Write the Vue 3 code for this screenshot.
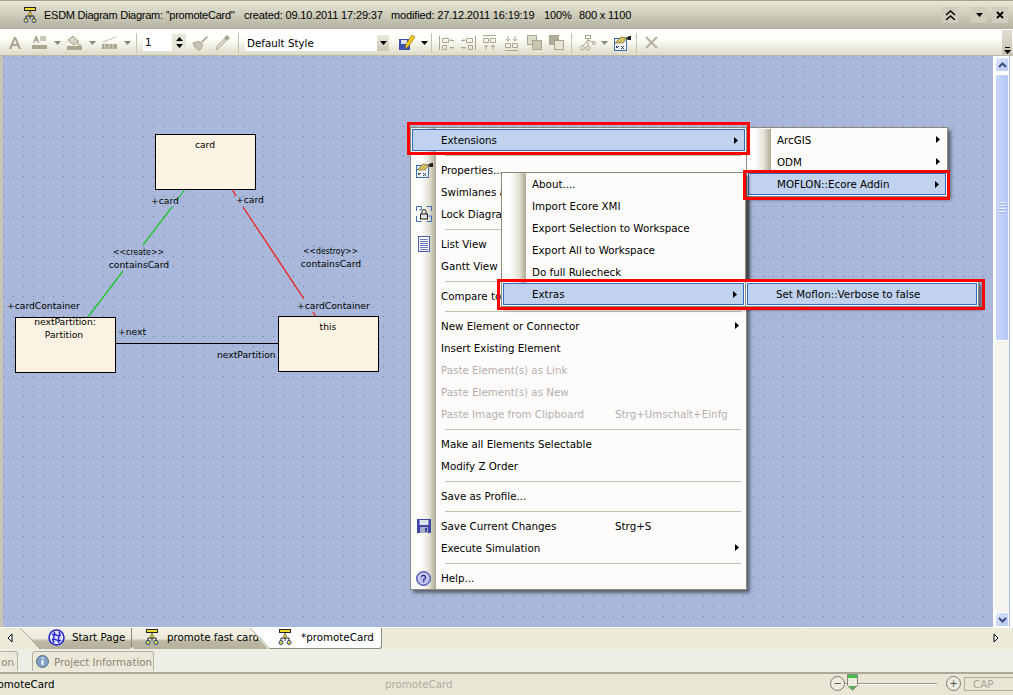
<script setup>
const mainMenu = [
  { label: 'Extensions', arrow: true, active: true },
  { sep: true },
  { label: 'Properties...', icon: 'props' },
  { label: 'Swimlanes and Matrix...' },
  { label: 'Lock Diagram', icon: 'lock' },
  { sep: true },
  { label: 'List View', icon: 'list' },
  { label: 'Gantt View' },
  { sep: true },
  { label: 'Compare to Baseline' },
  { sep: true },
  { label: 'New Element or Connector', arrow: true },
  { label: 'Insert Existing Element' },
  { label: 'Paste Element(s) as Link', off: true },
  { label: 'Paste Element(s) as New', off: true },
  { label: 'Paste Image from Clipboard', off: true, key: 'Strg+Umschalt+Einfg' },
  { sep: true },
  { label: 'Make all Elements Selectable' },
  { label: 'Modify Z Order' },
  { sep: true },
  { label: 'Save as Profile...' },
  { sep: true },
  { label: 'Save Current Changes', icon: 'save', key: 'Strg+S' },
  { label: 'Execute Simulation', arrow: true },
  { sep: true },
  { label: 'Help...', icon: 'help' },
]

const extMenu = [
  { label: 'ArcGIS', arrow: true },
  { label: 'ODM', arrow: true },
  { label: 'MOFLON::Ecore Addin', arrow: true, active: true },
]

const addinMenu = [
  { label: 'About....' },
  { label: 'Import Ecore XMI' },
  { label: 'Export Selection to Workspace' },
  { label: 'Export All to Workspace' },
  { label: 'Do full Rulecheck' },
  { label: 'Extras', arrow: true, active: true },
]

const boxes = [
  { x: 155.5, y: 134.5, w: 100, h: 55 },
  { x: 15.5, y: 317.5, w: 100, h: 55 },
  { x: 278.5, y: 316.5, w: 100, h: 55 },
]

const labels = [
  { x: 205, y: 148, t: 'card', mid: true },
  { x: 65, y: 325, t: 'nextPartition:', mid: true },
  { x: 64, y: 338, t: 'Partition', mid: true },
  { x: 328, y: 330, t: 'this', mid: true },
  { x: 151, y: 204, t: '+card' },
  { x: 236, y: 203, t: '+card' },
  { x: 138.5, y: 255, t: '<<create>>', mid: true, len: 51 },
  { x: 139, y: 268, t: 'containsCard', mid: true },
  { x: 330.5, y: 254, t: '<<destroy>>', mid: true, len: 55 },
  { x: 331, y: 267, t: 'containsCard', mid: true },
  { x: 7, y: 309, t: '+cardContainer' },
  { x: 297, y: 309, t: '+cardContainer' },
  { x: 118, y: 335, t: '+next' },
  { x: 217, y: 358, t: 'nextPartition' },
]
</script>

<template>
  <div class="app">
    <svg class="defs" width="0" height="0">
      <symbol id="diagram" viewBox="0 0 14 16">
        <rect x="1.5" y="0.5" width="11" height="3" fill="#f2dc2c" stroke="#222" />
        <path d="M7 4v8M3 12V9h8v3" fill="none" stroke="#222" />
        <path d="M7 5l2 2-2 2-2-2z" fill="#e8c820" stroke="#444" stroke-width=".5" />
        <circle cx="3" cy="13.5" r="2" fill="#f2dc2c" stroke="#1a3fa0" />
        <circle cx="11" cy="13.5" r="2" fill="#f2dc2c" stroke="#1a3fa0" />
      </symbol>
      <symbol id="props" viewBox="0 0 18 16">
        <rect x="1.5" y="3.5" width="12" height="12" fill="#f4f6fc" stroke="#3a6db5" />
        <path d="M3 11l1.5 1.5L6 11M3 13l1.5-1.5M8 11l3 3M11 11l-3 3" stroke="#30405a" fill="none" />
        <path d="M2 8l6-6 6 1-4 5z" fill="#c9b24a" stroke="#6b5d20" stroke-width=".6" />
        <path d="M5 7l4-4M8 8l3-4" stroke="#f2e9b0" stroke-width=".7" />
        <path d="M13 3l3-2h2v4h-3z" fill="#222" />
      </symbol>
      <symbol id="arrowDown" viewBox="0 0 7 4">
        <path d="M0 0h7L3.5 4z" />
      </symbol>
    </svg>

    <header class="titlebar">
      <svg class="title-icon" width="14" height="16"><use href="#diagram" /></svg>
      <span class="t-name">ESDM Diagram Diagram: ''promoteCard''</span>
      <span class="t-created">created: 09.10.2011 17:29:37</span>
      <span class="t-mod">modified: 27.12.2011 16:19:19</span>
      <span class="t-zoom">100%</span>
      <span class="t-size">800 x 1100</span>
      <div class="title-btns">
        <button class="tbtn wide">
          <svg width="11" height="10" fill="none" stroke="#000" stroke-width="1.5"><path d="M1 5l4.5-4 4.5 4M1 10l4.5-4 4.5 4" /></svg>
        </button>
        <button class="tbtn gap"><svg width="7" height="4"><use href="#arrowDown" /></svg></button>
        <button class="tbtn">
          <svg width="8" height="8" stroke="#000" stroke-width="1.8"><path d="M1 1l6 6M7 1L1 7" /></svg>
        </button>
      </div>
    </header>

    <div class="toolbar">
      <svg class="tool ml8" width="14" height="14" fill="#a8a690"><path d="M1 13L6 1h2l5 12h-2.5l-1-3H4.5l-1 3zM5.3 8h3.4L7 3.5z" /></svg>
      <svg class="tool ml10" width="15" height="15" fill="#a8a690"><path d="M1 8L3.5 1H5l2.5 7H6L5.5 6H3L2.5 8z" /><rect x="8" y="1" width="6" height="5" fill="#c8c6b4" /><rect y="10" width="15" height="4" /></svg>
      <svg class="tool ml7" width="7" height="4" fill="#8a8878"><use href="#arrowDown" /></svg>
      <svg class="tool ml6" width="16" height="16" fill="#a8a690"><path d="M1 5l5-4 5 5-4 4z" fill="#d8d6c4" stroke="#a09e88" /><path d="M11 5v5h3" fill="none" stroke="#a09e88" /><rect y="11" width="15" height="4" /></svg>
      <svg class="tool ml6" width="7" height="4" fill="#8a8878"><use href="#arrowDown" /></svg>
      <svg class="tool ml6" width="16" height="14" fill="#a8a690"><path d="M1 6L14 1" stroke="#c0beaa" /><rect y="8" width="15" height="5" /><path d="M3 7v7M7 7v7M11 7v7" stroke="#e0decc" /></svg>
      <svg class="tool ml6" width="7" height="4" fill="#8a8878"><use href="#arrowDown" /></svg>
      <i class="vsep ml5"></i>
      <div class="num">1</div>
      <div class="spin">
        <svg width="7" height="4"><path d="M0 4h7L3.5 0z" /></svg>
        <svg width="7" height="4"><use href="#arrowDown" /></svg>
      </div>
      <svg class="tool ml6" width="17" height="17"><path d="M1 9l6-2 4 4-3 5c-2 1-6-3-7-7z" fill="#c6c4b0" stroke="#9a9884" stroke-width=".7" /><path d="M9 8l6-6 1 1-6 6z" fill="#9a9884" /></svg>
      <svg class="tool ml5" width="17" height="17"><path d="M2 16l1-4 7-7 2 2-7 7z" fill="#d8d6c4" stroke="#aaa894" stroke-width=".8" /><path d="M10 4l3-3 3 3-3 3z" fill="#a8a690" /></svg>
      <i class="vsep ml7"></i>
      <div class="styles">
        <span>Default Style</span>
        <b><svg width="7" height="4"><use href="#arrowDown" /></svg></b>
      </div>
      <svg class="tool ml9" width="18" height="18"><rect x="1" y="5" width="11" height="11" fill="#3a4fb0" /><rect x="3" y="6" width="6" height="4" fill="#dfe4f4" /><path d="M7 15l1-5 6-9 3 2-6 9z" fill="#f3c61e" stroke="#8a6a10" stroke-width=".6" /></svg>
      <svg class="tool ml5" width="7" height="4"><use href="#arrowDown" /></svg>
      <i class="vsep ml3"></i>
      <svg class="tool ml7" width="16" height="16" fill="none" stroke="#a8a690"><path d="M.5 1v14M3.5 3.5h6v4h-6zM3.5 10.5h4v4h-4zM11 5.5h4M11 12.5h4M11 5.500l2-2M11 12.500l2 2" /></svg>
      <svg class="tool ml5" width="16" height="16" fill="none" stroke="#a8a690"><path d="M15.5 1v14M6.5 3.5h6v4h-6zM8.5 10.5h4v4h-4zM1 5.5h4M1 12.5h4M5 5.500l-2-2M5 12.500l-2 2" /></svg>
      <svg class="tool ml6" width="15" height="16" fill="none" stroke="#a8a690"><path d="M1 .5h13M1.5 3.5h5v4h-5zM8.5 3.5h5v4h-5zM4 15v-5M11 15v-5M4 10l-2 2M4 10l2 2M11 10l-2 2M11 10l2 2" /></svg>
      <svg class="tool ml7" width="15" height="16" fill="none" stroke="#a8a690"><path d="M1 15.5h13M1.5 8.5h5v4h-5zM8.5 8.5h5v4h-5zM4 1v5M11 1v5M4 6L2 4M4 6l2-2M11 6L9 4M11 6l2-2" /></svg>
      <svg class="tool ml8" width="16" height="15" fill="#dcdac8" stroke="#a8a690"><rect x=".5" y=".5" width="9" height="9" /><rect x="5.5" y="5.5" width="9" height="9" fill="#c8c6b4" /></svg>
      <svg class="tool ml6" width="16" height="15" fill="#c8c6b4" stroke="#a8a690"><rect x=".5" y=".5" width="9" height="9" fill="#b0ae9a" /><rect x="5.5" y="5.5" width="9" height="9" fill="#e8e6d6" /></svg>
      <i class="vsep ml6"></i>
      <svg class="tool ml8" width="16" height="16" fill="none" stroke="#a8a690"><rect x="5.5" y=".5" width="5" height="3" /><circle cx="2.5" cy="13" r="2" /><circle cx="8" cy="13" r="2" /><circle cx="14" cy="8" r="1.5" /><path d="M8 4v7M8 5L3 11M8 5l5 2" /></svg>
      <svg class="tool ml5" width="7" height="4" fill="#8a8878"><use href="#arrowDown" /></svg>
      <svg class="tool ml5" width="18" height="16"><use href="#props" /></svg>
      <i class="vsep ml5"></i>
      <svg class="tool ml8" width="13" height="13" stroke="#b4b2a0" stroke-width="2"><path d="M1 1l11 11M12 1L1 12" /></svg>
      <div class="grip">
        <svg width="7" height="7"><path d="M1 0h5v1H1zM0 3h7L3.5 7z" /></svg>
      </div>
    </div>

    <main class="canvas-row">
      <div class="canvas">
        <svg class="diagram" viewBox="3 56 990 570" width="990" height="570">
          <defs>
            <pattern id="dots" width="10" height="10" patternUnits="userSpaceOnUse">
              <rect x="3" y="6" width="1" height="1" fill="#6f7c9c" />
            </pattern>
          </defs>
          <rect x="3" y="56" width="990" height="570" fill="url(#dots)" />
          <path d="M802.5 56V626" stroke="#b6a8c8" stroke-dasharray="4 3" />
          <g fill="none" stroke="#22c62c" stroke-width="1.3">
            <path d="M185 189l-7 10M172 207l-29 38M123 271L88 317" />
          </g>
          <g fill="none" stroke="#f01c1c" stroke-width="1.3">
            <path d="M232 189l4 7M243 207l61 92M313 312l3 5" />
          </g>
          <path d="M116 343.5H278" stroke="#000" />
          <rect v-for="b in boxes" :key="b.x" :x="b.x" :y="b.y" :width="b.w" :height="b.h" fill="#fcf2e3" stroke="#000" />
          <text
            v-for="l in labels"
            :key="l.t + l.x"
            class="lbl"
            :x="l.x"
            :y="l.y"
            :text-anchor="l.mid ? 'middle' : 'start'"
            :textLength="l.len"
            :lengthAdjust="l.len ? 'spacingAndGlyphs' : undefined"
          >{{ l.t }}</text>
        </svg>
      </div>
      <div class="vscroll">
        <div class="sbtn">
          <svg width="9" height="6" fill="none" stroke="#3a4d80" stroke-width="2"><path d="M1 5l3.5-3.5L8 5" /></svg>
        </div>
        <div class="thumb">
          <i></i><i></i><i></i><i></i>
        </div>
        <div class="track"></div>
        <div class="sbtn">
          <svg width="9" height="6" fill="none" stroke="#3a4d80" stroke-width="2"><path d="M1 1l3.5 3.5L8 1" /></svg>
        </div>
      </div>
    </main>

    <nav class="tabs">
      <svg class="tab-nav" width="6" height="10" fill="#fff" stroke="#000"><path d="M5 1v8L1 5z" /></svg>
      <div class="tab first">
        <svg class="slant" width="21" height="21" fill="none" stroke="#77756a"><path d="M0 0l20 21" /></svg>
        <svg width="17" height="17" viewBox="0 0 17 17">
          <circle cx="8.5" cy="8.5" r="7.5" fill="#e4e6fa" stroke="#2424d0" stroke-width="1.6" />
          <path d="M4 6c3-3 5 3 9 0M4 11c4-3 5 3 9 0M6 3c3 3-3 5 0 11M11 3c3 3-3 7 0 11" fill="none" stroke="#2424d0" stroke-width="1.4" />
        </svg>
        <span>Start Page</span>
      </div>
      <div class="tab second">
        <svg width="14" height="16"><use href="#diagram" /></svg>
        <span>promote fast card</span>
      </div>
      <div class="tab current">
        <svg class="slant" width="21" height="21" fill="none" stroke="#77756a"><path d="M0 0l20 21" /></svg>
        <svg width="14" height="16"><use href="#diagram" /></svg>
        <span>*promoteCard</span>
      </div>
      <svg class="tab-next" width="6" height="10" fill="#fff" stroke="#000"><path d="M1 1v8l4-4z" /></svg>
    </nav>

    <div class="panels">
      <div class="panel clipped">on</div>
      <div class="panel info">
        <svg width="13" height="13"><circle cx="6.5" cy="6.5" r="6" fill="#7f9ec0" stroke="#55708f" /><rect x="5.5" y="5" width="2" height="5" fill="#fff" /><rect x="5.5" y="2.5" width="2" height="1.5" fill="#fff" /></svg>
        <span>Project Information</span>
      </div>
    </div>

    <footer class="status">
      <span class="st-left">promoteCard</span>
      <span class="st-mid">promoteCard</span>
      <span class="round">&minus;</span>
      <div class="rail">
        <svg class="knob" width="11" height="17" viewBox="0 0 11 17">
          <path d="M.5.5h10v11l-5 5-5-5z" fill="#eeecdf" stroke="#8a8a7a" />
          <path d="M1 1h9v3H1z" fill="#3fc24a" />
          <path d="M1.500 12l4 4 4-4z" fill="#5aa85a" />
        </svg>
      </div>
      <span class="round">+</span>
      <span class="cap">CAP</span>
    </footer>

    <!-- popup menus -->
    <div class="menu m-main">
      <template v-for="(it, i) in mainMenu" :key="i">
        <div v-if="it.sep" class="sep"></div>
        <div v-else class="item" :class="{ active: it.active, off: it.off }">
          <span class="ico">
            <svg v-if="it.icon === 'props'" width="18" height="16"><use href="#props" /></svg>
            <svg v-else-if="it.icon === 'lock'" width="16" height="16" fill="none" stroke="#3a6db5">
              <path d="M.5 5V.5h5v3h-2M10.5.5h5V5M.5 10v5.500h5M10.5 15.500h5V10h-3" />
              <rect x="4.5" y="8" width="7" height="5" fill="#e4e4e4" stroke="#222" />
              <path d="M6 8V5.500a2 2 0 0 1 4 0V8" stroke="#222" />
            </svg>
            <svg v-else-if="it.icon === 'list'" width="12" height="16" fill="#fff" stroke="#4a58b0">
              <rect x=".5" y=".5" width="11" height="15" />
              <path d="M2 3.5h8M2 5.5h8M2 7.5h8M2 9.5h8M2 11.5h8M2 13.5h8" stroke="#6a78c8" />
            </svg>
            <svg v-else-if="it.icon === 'save'" width="14" height="14">
              <rect width="14" height="14" fill="#3c46a8" />
              <rect x="2.5" y="1" width="9" height="5" fill="#dfe2f2" />
              <rect x="3" y="8" width="8" height="6" fill="#a8acc4" />
              <rect x="8" y="9" width="2" height="4" fill="#3c46a8" />
            </svg>
            <svg v-else-if="it.icon === 'help'" width="15" height="15">
              <circle cx="7.5" cy="7.5" r="7" fill="#8c8fdc" stroke="#4a4dac" />
              <circle cx="7.5" cy="7.5" r="5" fill="#b6b8ec" stroke="#eef" />
              <path d="M5.5 6a2 2 0 1 1 3 2c-1 .5-1 1-1 2" fill="none" stroke="#33358c" stroke-width="1.3" />
              <rect x="7" y="10.5" width="1.3" height="1.3" fill="#33358c" />
            </svg>
          </span>
          <span class="lab">{{ it.label }}</span>
          <span v-if="it.key" class="key">{{ it.key }}</span>
          <svg v-if="it.arrow" class="arr" width="4" height="7"><path d="M0 0l4 3.5L0 7z" /></svg>
        </div>
      </template>
    </div>

    <div class="menu m-ext">
      <div v-for="it in extMenu" :key="it.label" class="item" :class="{ active: it.active }">
        <span class="ico"></span>
        <span class="lab">{{ it.label }}</span>
        <svg class="arr" width="4" height="7"><path d="M0 0l4 3.5L0 7z" /></svg>
      </div>
    </div>

    <div class="menu m-addin">
      <div v-for="it in addinMenu" :key="it.label" class="item" :class="{ active: it.active }">
        <span class="ico"></span>
        <span class="lab">{{ it.label }}</span>
        <svg v-if="it.arrow" class="arr" width="4" height="7"><path d="M0 0l4 3.5L0 7z" /></svg>
      </div>
    </div>

    <div class="menu m-verbose">
      <div class="item active">
        <span class="lab">Set Moflon::Verbose to false</span>
      </div>
    </div>

    <i class="mark r1"></i>
    <i class="mark r2"></i>
    <i class="mark r3"></i>
  </div>
</template>

<style>
html,
body {
  margin: 0;
  background: #ece9d8;
}
</style>

<style scoped>
.app {
  position: relative;
  width: 1013px;
  height: 695px;
  overflow: hidden;
  display: flex;
  flex-direction: column;
  font-family: 'DejaVu Sans', sans-serif;
  font-size: 10.3px;
  color: #000;
  background: #ece9d8;
}
.defs {
  position: absolute;
}

.titlebar {
  box-sizing: border-box;
  height: 29px;
  flex: none;
  display: flex;
  align-items: center;
  border-top: 1px solid #a4a28c;
  background: linear-gradient(#e8e6d6, #b3b19e);
  font-family: 'Liberation Sans', sans-serif;
  font-size: 11px;
  letter-spacing: -0.15px;
  white-space: nowrap;
}
.titlebar span {
  flex: none;
}
.title-icon {
  margin-left: 23px;
  flex: none;
}
.t-name {
  margin-left: 7px;
  width: 200px;
  letter-spacing: -0.25px;
}
.t-created {
  width: 147px;
}
.t-mod {
  width: 153px;
}
.t-zoom {
  width: 35px;
}
.t-size {
  width: 100px;
}
.title-btns {
  margin-left: auto;
  margin-right: 5px;
  display: flex;
}
.tbtn {
  width: 16px;
  height: 16px;
  padding: 0;
  border: 0;
  display: flex;
  align-items: center;
  justify-content: center;
  background: #cfcdbc;
}
.tbtn.wide {
  margin-right: 13px;
}
.tbtn.gap {
  margin-right: 5px;
}

.toolbar {
  box-sizing: border-box;
  height: 27px;
  flex: none;
  display: flex;
  align-items: center;
  border-top: 1px solid #fff;
  border-bottom: 1px solid #bcb9a5;
  background: linear-gradient(#fff, #fffff8 35%, #dcdac8);
  position: relative;
}
.tool {
  flex: none;
}
.ml3 { margin-left: 3px; }
.ml5 { margin-left: 5px; }
.ml6 { margin-left: 6px; }
.ml7 { margin-left: 7px; }
.ml8 { margin-left: 8px; }
.ml9 { margin-left: 9px; }
.ml10 { margin-left: 10px; }
.vsep {
  width: 1px;
  height: 20px;
  flex: none;
  background: #c4c2ae;
}
.num {
  box-sizing: border-box;
  width: 29px;
  height: 17px;
  flex: none;
  margin-left: 6px;
  padding: 1px 2px;
  background: #fff;
  line-height: 15px;
}
.spin {
  width: 14px;
  height: 17px;
  flex: none;
  display: flex;
  flex-direction: column;
  align-items: center;
  justify-content: center;
  gap: 3px;
  background: #e8e6d8;
}
.styles {
  box-sizing: border-box;
  width: 144px;
  height: 16px;
  flex: none;
  margin-left: 6px;
  padding-left: 2px;
  display: flex;
  align-items: center;
  justify-content: space-between;
  background: #fff;
}
.styles b {
  width: 12px;
  height: 16px;
  display: flex;
  align-items: center;
  justify-content: center;
  background: linear-gradient(#eceadc, #c8c6b4);
}
.grip {
  position: absolute;
  right: 1px;
  top: 0;
  width: 10px;
  height: 25px;
  display: flex;
  align-items: flex-end;
  justify-content: center;
  padding-bottom: 1px;
  box-sizing: border-box;
  background: linear-gradient(#e0dfd2, #c4c2b0);
}

.canvas-row {
  height: 571px;
  flex: none;
  display: flex;
  background: linear-gradient(90deg, #c9c7b3 3px, #fff 3px);
}
.canvas {
  width: 990px;
  flex: none;
  margin-left: 3px;
  background: #a9b8da;
}
.diagram {
  display: block;
}
.diagram rect {
  shape-rendering: crispEdges;
}
.lbl {
  font-family: 'DejaVu Sans', sans-serif;
  font-size: 9.2px;
  fill: #000;
}

.vscroll {
  width: 14px;
  flex: none;
  margin-left: 2px;
  padding-top: 1px;
  display: flex;
  flex-direction: column;
  align-items: stretch;
  border-right: 1px solid #a9bce6;
}
.sbtn {
  height: 15px;
  flex: none;
  display: flex;
  align-items: center;
  justify-content: center;
  border: 1px solid #fff;
  border-radius: 2px;
  box-sizing: border-box;
  background: linear-gradient(135deg, #dfe8fb, #b5c8f4);
}
.thumb {
  height: 267px;
  flex: none;
  margin-top: 2px;
  border: 1px solid #fff;
  border-radius: 2px;
  box-sizing: border-box;
  background: linear-gradient(90deg, #c8d6f8, #b4c8f5);
  display: flex;
  flex-direction: column;
  align-items: center;
  justify-content: center;
  gap: 1px;
}
.thumb i {
  width: 7px;
  height: 1px;
  background: #eef3ff;
  border-bottom: 1px solid #9db4e6;
}
.track {
  flex: 1;
  background: #f4f3ee;
}

.tabs {
  height: 22px;
  flex: none;
  position: relative;
  display: flex;
  align-items: flex-start;
  background: #ecead9;
  border-top: 1px solid #fff;
  box-sizing: border-box;
}
.tab-nav {
  margin: 5px 0 0 7px;
  flex: none;
}
.tab-next {
  position: absolute;
  right: 14px;
  top: 5px;
}
.tab {
  box-sizing: border-box;
  position: relative;
  height: 21px;
  flex: none;
  display: flex;
  align-items: center;
  padding-bottom: 3px;
  white-space: nowrap;
  background: linear-gradient(#f4f2e6, #eceada 50%, #bcb8a4 62%, #b5b19c);
}
.slant {
  position: absolute;
  left: 0;
  top: 0;
}
.tab.first {
  width: 112px;
  margin-left: 7px;
  padding-left: 28px;
  gap: 7px;
  border-right: 1px solid #8a8778;
  clip-path: polygon(0 0, 100% 0, 100% 90%, 98% 100%, 20px 100%);
}
.tab.second {
  width: 136px;
  padding-left: 13px;
  gap: 8px;
  clip-path: polygon(0 0, 118px 0, 100% 100%, 2px 100%, 0 90%);
}
.tab.current {
  width: 132px;
  margin-left: -18px;
  padding-left: 28px;
  gap: 9px;
  background: #fff;
  border-right: 1px solid #8a887a;
  border-bottom: 1px solid #8a887a;
  border-radius: 0 0 3px 0;
  clip-path: polygon(0 0, 100% 0, 100% 100%, 20px 100%);
}

.panels {
  height: 23px;
  flex: none;
  display: flex;
  align-items: flex-end;
  background: #efeee6;
  box-sizing: border-box;
  padding-bottom: 1px;
}
.panel {
  box-sizing: border-box;
  height: 20px;
  flex: none;
  display: flex;
  align-items: center;
  gap: 5px;
  color: #8a8478;
  white-space: nowrap;
  border: 1px solid #b4b2a2;
  border-bottom: 0;
  border-radius: 3px 3px 0 0;
  background: #ece9d8;
}
.panel.clipped {
  width: 18px;
  border-left: 0;
  justify-content: flex-end;
  padding-right: 3px;
  border-radius: 0 3px 0 0;
}
.panel.info {
  width: 122px;
  margin-left: 14px;
  padding-left: 3px;
}

.status {
  flex: 1;
  box-sizing: border-box;
  display: flex;
  align-items: center;
  padding-bottom: 2px;
  border-top: 2px solid #aca998;
  background: #e9e6d6;
  white-space: nowrap;
}
.st-left {
  margin-left: -13px;
  width: 371px;
  flex: none;
}
.st-mid {
  width: 445px;
  flex: none;
  color: #b0ae9e;
  margin-left: 27px;
}
.round {
  box-sizing: border-box;
  width: 15px;
  height: 15px;
  flex: none;
  border: 1px solid #7a7a70;
  border-radius: 50%;
  display: flex;
  align-items: center;
  justify-content: center;
  color: #555;
  line-height: 1;
  background: #eeecdf;
}
.rail {
  width: 101px;
  height: 2px;
  flex: none;
  position: relative;
  background: linear-gradient(#9a988a 50%, #fff 50%) no-repeat 0 0 / 92px 2px;
}
.knob {
  position: absolute;
  left: 2px;
  top: -9px;
}
.cap {
  box-sizing: border-box;
  width: 60px;
  height: 14px;
  flex: none;
  margin-left: 3px;
  padding-left: 8px;
  border: 1px solid #b0ae9e;
  color: #a8a698;
  line-height: 12px;
}

.menu {
  position: absolute;
  box-sizing: border-box;
  border: 1px solid #8c8a7c;
  padding: 1px;
  background: #fdfcfa;
  box-shadow: 3px 3px 3px rgba(0, 0, 0, 0.45);
}
.item {
  position: relative;
  box-sizing: border-box;
  height: 22px;
  display: flex;
  align-items: center;
  white-space: nowrap;
}
.item.active {
  border: 1px solid #316ac5;
  background: #c1d2ee;
}
.item.off {
  color: #b4aeae;
}
.ico {
  width: 23px;
  height: 100%;
  flex: none;
  display: flex;
  align-items: center;
  justify-content: center;
  background: linear-gradient(90deg, #fff 30%, #e4e2d4 70%, #aca993);
}
.item.active .ico {
  width: 22px;
  background: none;
}
.lab {
  margin-left: 6px;
}
.key {
  position: absolute;
  left: 203px;
}
.arr {
  position: absolute;
  right: 6px;
  top: 7px;
}
.sep {
  height: 8px;
  margin-left: 33px;
  margin-right: 4px;
  background: linear-gradient(#c4c2b4, #c4c2b4) no-repeat 0 50% / 100% 1px;
}
.m-main {
  left: 410px;
  top: 127px;
  width: 337px;
  height: 463px;
  background: linear-gradient(90deg, #fff 10px, #e4e2d4 18px, #aca993 25px, #fdfcfa 25px);
}
.m-main .ico {
  background: none;
}
.m-ext {
  left: 746px;
  top: 127px;
  width: 202px;
  height: 70px;
}
.m-addin {
  left: 501px;
  top: 172px;
  width: 245px;
  height: 135px;
  padding-top: 0;
}
.m-verbose {
  left: 745px;
  top: 281px;
  width: 234px;
  height: 26px;
}
.m-verbose .lab {
  margin-left: 28px;
}
.mark {
  position: absolute;
  box-sizing: border-box;
  border: 3px solid #f00;
  pointer-events: none;
}
.mark.r1 {
  left: 407px;
  top: 122px;
  width: 343px;
  height: 33px;
}
.mark.r2 {
  left: 743px;
  top: 170px;
  width: 207px;
  height: 30px;
}
.mark.r3 {
  left: 497px;
  top: 279px;
  width: 488px;
  height: 31px;
}
</style>
